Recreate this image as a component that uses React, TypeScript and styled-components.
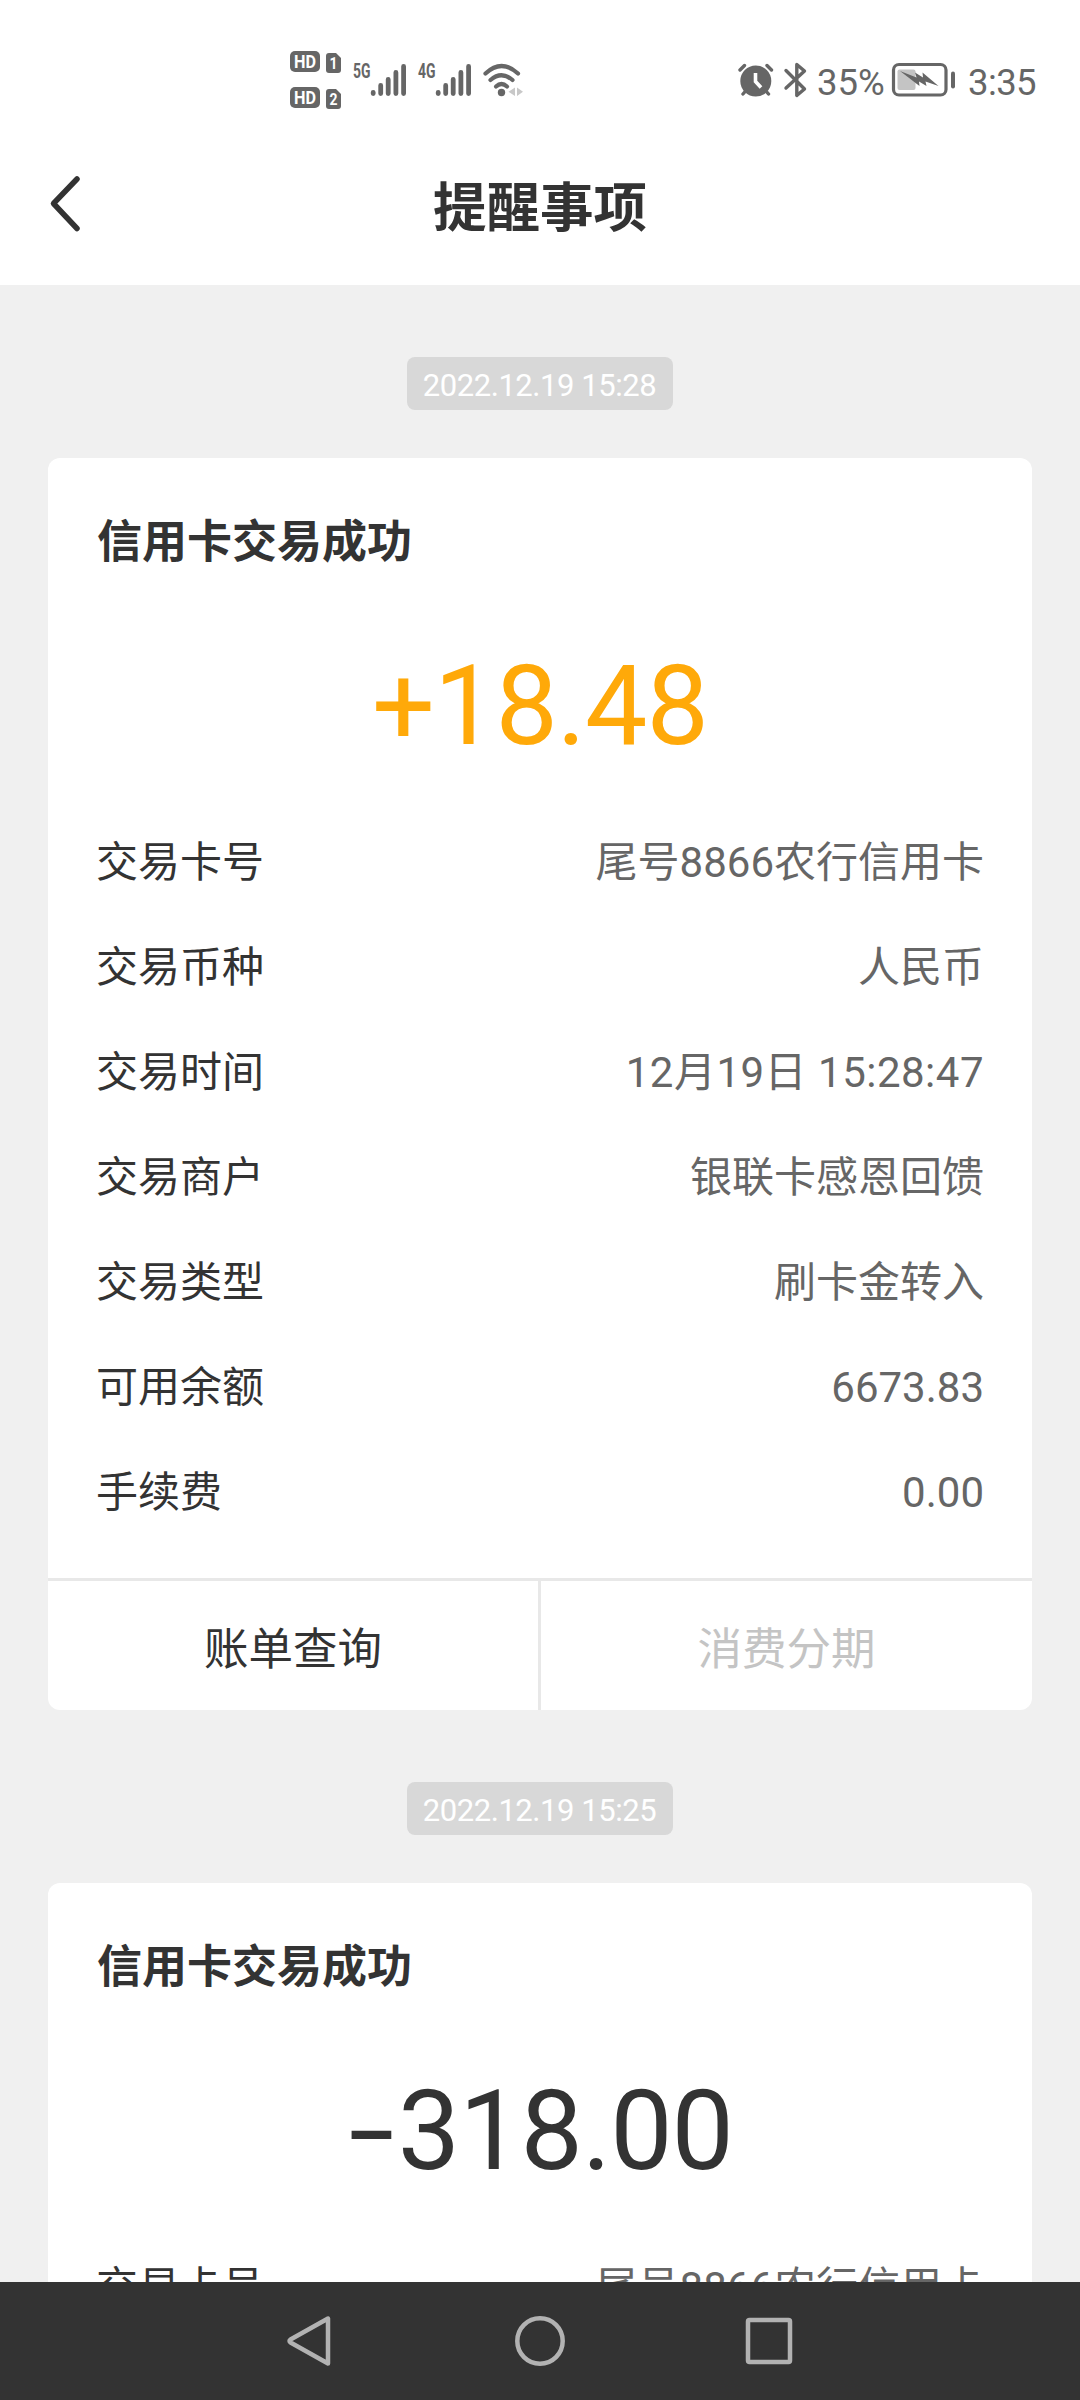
import React from 'react';
import styled, {createGlobalStyle} from "styled-components";

const theme = {
    text: '#333333',
    secondary: '#666666',
    status: '#666666',
    accent: '#ffa909',
    disabled: '#c4c4c4',
    line: '#e8e8e8',
    page: '#f0f0f0',
}

type RowType = {
    label: string
    value: string
    wide?: boolean
}

type MessageType = {
    time: string
    title: string
    sign: string
    amount: string
    income: boolean
    rows: RowType[]
}

const messages: MessageType[] = [
    {
        time: '2022.12.19 15:28',
        title: '信用卡交易成功',
        sign: '+',
        amount: '18.48',
        income: true,
        rows: [
            {label: '交易卡号', value: '尾号8866农行信用卡'},
            {label: '交易币种', value: '人民币'},
            {label: '交易时间', value: '12月19日 15:28:47', wide: true},
            {label: '交易商户', value: '银联卡感恩回馈'},
            {label: '交易类型', value: '刷卡金转入'},
            {label: '可用余额', value: '6673.83'},
            {label: '手续费', value: '0.00'},
        ],
    },
    {
        time: '2022.12.19 15:25',
        title: '信用卡交易成功',
        sign: '-',
        amount: '318.00',
        income: false,
        rows: [
            {label: '交易卡号', value: '尾号8866农行信用卡'},
        ],
    },
]

const HdBadge = ({sim}: { sim: string }) => (
    <svg width="52" height="22" viewBox="0 0 52 22">
        <rect x="0" y="0" width="30" height="21" rx="5" fill={theme.status}/>
        <SvgText x="4" y="17" fontSize="18" fontWeight="700" fill="#fff" textLength="22"
                 lengthAdjust="spacingAndGlyphs">HD</SvgText>
        <path d="M39 2H46L51 7V19Q51 22 48 22H39Q36 22 36 19V5Q36 2 39 2Z" fill={theme.status}/>
        <SvgText x="39.5" y="18" fontSize="17" fontWeight="700" fill="#fff" textLength="8"
                 lengthAdjust="spacingAndGlyphs">{sim}</SvgText>
    </svg>
)

const Signal = ({network}: { network: string }) => (
    <svg width="54" height="34" viewBox="0 0 54 34">
        <SvgText x="0" y="15" fontSize="20" fontWeight="700" fill={theme.status} textLength="17.5"
                 lengthAdjust="spacingAndGlyphs">{network}</SvgText>
        <g stroke={theme.status} strokeWidth="4.8" strokeLinecap="round">
            <path d="M20.2 29.4V30.6M27.7 22.4V30.6M35.2 16.4V30.6M42.9 9.4V30.6M50.6 3.4V30.6"/>
        </g>
    </svg>
)

const WifiIcon = () => (
    <svg width="42" height="34" viewBox="0 0 42 34">
        <g fill="none" stroke={theme.status} strokeWidth="4.2" strokeLinecap="round">
            <path d="M2.5 10.5Q18.5 -4.5 35 10.5"/>
            <path d="M7.5 17Q18.5 7.5 29.5 17"/>
            <path d="M13 23.5Q18.5 18.5 24 23.5"/>
        </g>
        <circle cx="18.5" cy="29.5" r="3.7" fill={theme.status}/>
        <path d="M32 24.5V33L25.5 28.7ZM34 24.5V33L40 28.7Z" fill="#c8c8c8"/>
    </svg>
)

const AlarmIcon = () => (
    <svg width="36" height="34" viewBox="0 0 36 34">
        <circle cx="17.8" cy="18" r="15.5" fill={theme.status}/>
        <g fill="none" stroke={theme.status} strokeWidth="3.4" strokeLinecap="round">
            <path d="M2 7L6.5 2.5M33.5 7L29 2.5M5 31L8 27.5M30.5 31L27.5 27.5"/>
        </g>
        <path d="M17.5 10V18.5L23 24.5" fill="none" stroke="#fff" strokeWidth="3.6"/>
    </svg>
)

const BluetoothIcon = () => (
    <svg width="24" height="36" viewBox="0 0 24 36">
        <path d="M2 8.5L20.5 27L12.8 33.5V2.5L20.5 9L2 26" fill="none" stroke={theme.status}
              strokeWidth="3.4" strokeLinecap="round" strokeLinejoin="round"/>
    </svg>
)

const BatteryIcon = () => (
    <svg width="64" height="34" viewBox="0 0 64 34">
        <rect x="1.5" y="1.5" width="52.5" height="30.5" rx="5.5" fill="none" stroke={theme.status}
              strokeWidth="3.2"/>
        <rect x="5.5" y="6.5" width="18" height="20.5" rx="2" fill="#c4c4c4"/>
        <path d="M8 8L24.5 14.5L23 9.5L31 14.5L30.5 9.5L46.5 23L33.5 18.5L34.5 23L27 18.5L27.5 23Z"
              fill={theme.status}/>
        <rect x="59" y="8.5" width="4" height="17" rx="2" fill={theme.status}/>
    </svg>
)

const Message = ({time, title, sign, amount, income, rows}: MessageType) => {
    return (
        <>
            <TimeLabel>{time}</TimeLabel>
            <Card>
                <CardTitle>{title}</CardTitle>
                <Amount $income={income}>
                    <Sign $stretch={!income}>{sign}</Sign>{amount}
                </Amount>
                <Details>
                    {rows.map((row) => (
                        <Row key={row.label}>
                            <Label>{row.label}</Label>
                            <Value $wide={row.wide}>{row.value}</Value>
                        </Row>
                    ))}
                </Details>
                <Actions>
                    <Action>账单查询</Action>
                    <Action disabled>消费分期</Action>
                </Actions>
            </Card>
        </>
    )
}

const App = () => {
    return (
        <Screen>
            <GlobalStyle/>
            <StatusBar>
                <StatusGroup>
                    <Badges>
                        <HdBadge sim="1"/>
                        <HdBadge sim="2"/>
                    </Badges>
                    <Signal network="5G"/>
                    <Signal network="4G"/>
                    <WifiIcon/>
                </StatusGroup>
                <StatusInfo>
                    <Alarms>
                        <AlarmIcon/>
                        <BluetoothIcon/>
                    </Alarms>
                    <Percent>35%</Percent>
                    <BatteryIcon/>
                    <Clock>3:35</Clock>
                </StatusInfo>
            </StatusBar>
            <Header>
                <BackButton>
                    <svg width="32" height="56" viewBox="0 0 32 56">
                        <path d="M28 3L4.5 27.5L28 52.5" fill="none" stroke={theme.text} strokeWidth="5.5"
                              strokeLinecap="round" strokeLinejoin="round"/>
                    </svg>
                </BackButton>
                <Title>提醒事项</Title>
            </Header>
            <List>
                {messages.map((m) => <Message key={m.time} {...m}/>)}
            </List>
            <NavBar>
                <svg width="46" height="54" viewBox="0 0 46 54">
                    <path d="M42 4.5V49.5L4.5 28.5Q2.5 27 4.5 25.5Z"/>
                </svg>
                <svg width="54" height="54" viewBox="0 0 54 54">
                    <circle cx="27" cy="27" r="22.7"/>
                </svg>
                <svg width="50" height="54" viewBox="0 0 50 54">
                    <rect x="4" y="6" width="42" height="42" rx="1.5"/>
                </svg>
            </NavBar>
        </Screen>
    );
};

export default App;

const GlobalStyle = createGlobalStyle`
  * {
    box-sizing: border-box;
    margin: 0;
    padding: 0;
  }

  body {
    font-family: Roboto, 'Noto Sans CJK SC', sans-serif;
    color: ${theme.text};
    background-color: ${theme.page};
  }

  svg {
    display: block;
    flex-shrink: 0;
    overflow: visible;
  }
`

const Screen = styled.div`
  width: 1080px;
  height: 2400px;
  display: flex;
  flex-direction: column;
  overflow: hidden;
`

const SvgText = styled.text`
  font-family: Roboto, sans-serif;
`

const StatusBar = styled.div`
  height: 120px;
  flex-shrink: 0;
  padding: 40px 43px 0 290px;
  display: flex;
  justify-content: space-between;
  align-items: flex-start;
  background-color: #ffffff;
`

const StatusGroup = styled.div`
  height: 80px;
  display: flex;
  align-items: center;
  gap: 11px;
`

const Badges = styled.div`
  display: flex;
  flex-direction: column;
  gap: 14px;
`

const StatusInfo = styled.div`
  height: 80px;
  display: flex;
  align-items: center;
  color: ${theme.status};
  font-size: 36.5px;
`

const Alarms = styled.div`
  display: flex;
  align-items: center;
  gap: 10px;
`

const Percent = styled.span`
  width: 68px;
  margin: 4px 7px 0 9px;
`

const Clock = styled.span`
  width: 69px;
  margin: 4px 0 0 12px;
  letter-spacing: -0.6px;
  white-space: nowrap;
`

const Header = styled.header`
  height: 165px;
  flex-shrink: 0;
  display: grid;
  grid-template-columns: 80px 1fr 80px;
  align-items: center;
  padding: 2px 49px 0;
  background-color: #ffffff;
`

const BackButton = styled.button`
  justify-self: start;
  border: none;
  background: none;
`

const Title = styled.h1`
  padding-top: 10px;
  font-size: 53.5px;
  font-weight: 700;
  line-height: 80px;
  text-align: center;
`

const List = styled.main`
  flex: 1;
  min-height: 0;
  overflow: hidden;
  padding: 0 48px;
  display: flex;
  flex-direction: column;
  align-items: center;
`

const TimeLabel = styled.time`
  width: 266px;
  height: 53px;
  flex-shrink: 0;
  margin: 72px 0 48px;
  padding-right: 1px;
  border-radius: 8px;
  background-color: #d8d8d8;
  color: #ffffff;
  font-size: 31px;
  line-height: 57px;
  letter-spacing: -0.45px;
  text-align: center;
  white-space: nowrap;
`

const Card = styled.section`
  width: 984px;
  flex-shrink: 0;
  border-radius: 12px;
  background-color: #ffffff;
  overflow: hidden;
`

const CardTitle = styled.h2`
  padding: 53px 49px 0;
  font-size: 45px;
  font-weight: 700;
  line-height: 64px;
`

const Amount = styled.p<{ $income: boolean }>`
  height: 130px;
  margin-top: 66px;
  padding-left: ${({$income}) => $income ? '0' : '9px'};
  font-size: 111px;
  line-height: 130px;
  letter-spacing: -1px;
  text-align: center;
  color: ${({$income}) => $income ? theme.accent : theme.text};
`

const Sign = styled.span<{ $stretch: boolean }>`
  display: inline-block;
  margin-right: ${({$stretch}) => $stretch ? '12px' : '0'};
  transform: ${({$stretch}) => $stretch ? 'scaleX(1.5)' : 'none'};
`

const Details = styled.div`
  padding: 39.5px 48px 32.5px;
`

const Row = styled.div`
  height: 105px;
  display: flex;
  justify-content: space-between;
  align-items: center;
  font-size: 42px;
  line-height: 60px;
`

const Label = styled.span`
`

const Value = styled.span<{ $wide?: boolean }>`
  color: ${theme.secondary};
  letter-spacing: ${({$wide}) => $wide ? '0.5px' : 'normal'};
`

const Actions = styled.div`
  display: grid;
  grid-template-columns: 493px 1fr;
  border-top: 3px solid ${theme.line};
`

const Action = styled.button`
  height: 129px;
  border: none;
  background: none;
  font-family: inherit;
  font-size: 44.5px;
  color: ${theme.text};

  &:first-child {
    border-right: 3px solid ${theme.line};
  }

  &:disabled {
    color: ${theme.disabled};
  }
`

const NavBar = styled.nav`
  height: 118px;
  flex-shrink: 0;
  padding: 0 286px;
  display: flex;
  justify-content: space-between;
  align-items: center;
  background-color: #333333;

  svg {
    fill: none;
    stroke: #b2b2b2;
    stroke-width: 4.5;
    stroke-linejoin: round;
  }

  svg:nth-child(2) {
    margin-left: 3px;
  }
`
